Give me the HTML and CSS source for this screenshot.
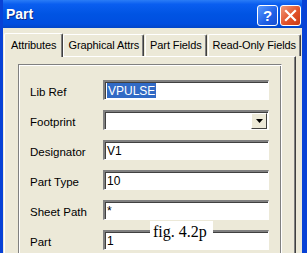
FILE: index.html
```html
<!DOCTYPE html>
<html>
  <head>
    <title>Part</title>
    <link rel="stylesheet" href="styles.css">
  </head>
  <body>
    <div class="window">
      <div class="titlebar">
        <span class="title">Part</span>
        <div class="title-buttons">
          <span class="tbtn help">?</span>
          <span class="tbtn close">
            <svg width="13" height="13" viewBox="0 0 13 13">
              <path d="M2 2 L11 11 M11 2 L2 11" stroke="white" stroke-width="2.2" stroke-linecap="square"/>
            </svg>
          </span>
        </div>
      </div>

      <div class="content">
        <div class="tabs">
          <div class="tab active">Attributes</div>
          <div class="tab">Graphical Attrs</div>
          <div class="tab">Part Fields</div>
          <div class="tab">Read-Only Fields</div>
        </div>

        <div class="panel">
          <div class="group">
            <div class="row">
              <label>Lib Ref</label>
              <div class="field"><span class="selected">VPULSE</span></div>
            </div>
            <div class="row">
              <label>Footprint</label>
              <div class="field combo">
                <span class="drop-btn">
                  <svg width="7" height="4" viewBox="0 0 7 4"><path d="M0 0 H7 L3.5 4 Z" fill="#000"/></svg>
                </span>
              </div>
            </div>
            <div class="row">
              <label>Designator</label>
              <div class="field">V1</div>
            </div>
            <div class="row">
              <label>Part Type</label>
              <div class="field">10</div>
            </div>
            <div class="row">
              <label>Sheet Path</label>
              <div class="field">*</div>
            </div>
            <div class="row">
              <label>Part</label>
              <div class="field">1</div>
            </div>
          </div>
        </div>
      </div>

      <div class="caption">fig. 4.2p</div>
    </div>
  </body>
</html>
```

FILE: styles.css
```css
:root {
  --face: #ece9d8;
  --shadow: #808080;
  --dark: #404040;
}

body {
  margin: 0;
  font-family: "Liberation Sans", Arial, sans-serif;
  font-size: 11px;
  color: #000;
}

.window {
  position: relative;
  width: 307px;
  height: 253px;
  overflow: hidden;
  box-sizing: border-box;
  background: var(--face);
  border-left: 3px solid #0842d6;
  border-right: 5px solid #0842d6;
}

.titlebar {
  height: 28px;
  margin: 0 -5px 0 -3px;
  background: linear-gradient(#2a7cf6 0%, #0a5ef0 15%, #0054e3 50%, #004ee0 85%, #0246c8 100%);
  display: flex;
  align-items: center;
  justify-content: space-between;
  padding: 0 6px;
}

.title {
  color: #fff;
  font-weight: bold;
  font-size: 14px;
  text-shadow: 1px 1px #0a2a8a;
}

.title-buttons {
  display: flex;
  gap: 2px;
  padding-top: 2px;
}

.tbtn {
  width: 19px;
  height: 19px;
  border: 1px solid #fff;
  border-radius: 3px;
  display: flex;
  align-items: center;
  justify-content: center;
  color: #fff;
  font-weight: bold;
  font-size: 15px;
}

.help {
  background: linear-gradient(135deg, #5a9bff, #1f5fe6 60%, #1a4fd0);
}

.close {
  background: linear-gradient(135deg, #f09a7c, #e2532a 55%, #c83a14);
}

.content {
  padding: 3px 6px 0 1px;
}

.tabs {
  display: flex;
  align-items: flex-end;
  height: 25px;
  padding-left: 1px;
}

.tab {
  flex-shrink: 0;
  white-space: nowrap;
  height: 21px;
  line-height: 21px;
  padding: 0 4px;
  border-left: 1px solid #fff;
  border-top: 1px solid #fff;
  border-right: 1px solid var(--dark);
  box-shadow: inset -1px 0 var(--shadow);
  border-radius: 2px 2px 0 0;
  margin-right: 1px;
  font-size: 11px;
  letter-spacing: -0.1px;
}

.tab.active {
  height: 23px;
  line-height: 23px;
  padding: 0 6px;
  margin: 0 0 -1px -1px;
  position: relative;
  z-index: 1;
  background: var(--face);
}

.panel {
  border-left: 1px solid #fff;
  border-top: 1px solid #fff;
  border-right: 1px solid var(--dark);
  box-shadow: inset -1px 0 var(--shadow);
  height: 200px;
  padding: 7px 13px 0 13px;
}

.group {
  border-left: 1px solid var(--shadow);
  border-top: 1px solid var(--shadow);
  border-right: 1px solid #fff;
  box-shadow: inset 1px 1px #fff, inset -1px 0 var(--shadow);
  height: 200px;
  padding: 15px 0 0 11px;
}

.row {
  display: flex;
  align-items: center;
  height: 20px;
  margin-bottom: 10px;
}

.row label {
  width: 73px;
  font-size: 11.5px;
  padding-top: 3px;
}

.field {
  width: 166px;
  height: 20px;
  box-sizing: border-box;
  background: #fff;
  border-top: 2px solid var(--shadow);
  border-left: 2px solid var(--shadow);
  border-bottom: 1px solid #fff;
  border-right: 1px solid #fff;
  box-shadow: inset 1px 1px var(--dark);
  padding: 1px 2px;
  font-size: 12px;
  line-height: 16px;
  display: flex;
}

.selected {
  background: #316ac5;
  color: #fff;
  padding: 0 1px;
}

.combo {
  justify-content: flex-end;
  padding: 1px 1px 1px 2px;
}

.drop-btn {
  width: 16px;
  height: 16px;
  box-sizing: border-box;
  background: var(--face);
  border-top: 1px solid #fff;
  border-left: 1px solid #fff;
  border-right: 1px solid var(--dark);
  border-bottom: 1px solid var(--dark);
  display: flex;
  align-items: center;
  justify-content: center;
}

.caption {
  position: absolute;
  left: 147px;
  top: 221px;
  padding: 2px 6px 2px 3px;
  background: #fff;
  font-family: "Liberation Serif", "Times New Roman", serif;
  font-size: 16px;
}
```
